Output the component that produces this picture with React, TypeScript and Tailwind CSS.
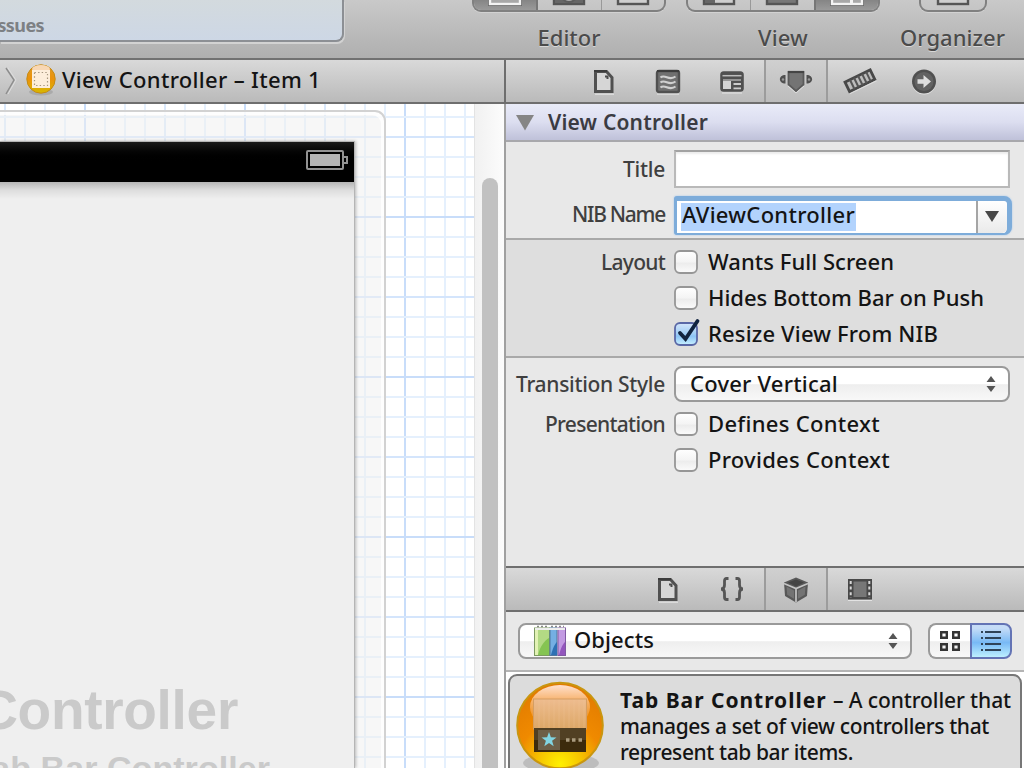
import { useLayoutEffect, useRef, useState } from "react";
import type { ReactNode } from "react";

/* Text tracked so that it fills a given width. */
function Fit({ w, className = "", children }: { w: number; className?: string; children: ReactNode }) {
  const ref = useRef<HTMLSpanElement>(null);
  const [spacing, setSpacing] = useState(0);
  useLayoutEffect(() => {
    const el = ref.current;
    if (!el) return;
    const n = (el.textContent ?? "").length;
    setSpacing((s) => s + (w - (el.getBoundingClientRect().width - s)) / n);
  }, [w]);
  return (
    <span ref={ref} className={`inline-block shrink-0 whitespace-pre ${className}`} style={{ letterSpacing: spacing }}>
      {children}
    </span>
  );
}

function Checkbox({ checked = false }: { checked?: boolean }) {
  return (
    <svg width="28" height="30" viewBox="0 0 28 30" className="shrink-0 overflow-visible">
      <defs>
        <linearGradient id="cbOff" x1="0" y1="0" x2="0" y2="1">
          <stop offset="0" stopColor="#fff" />
          <stop offset=".5" stopColor="#f4f4f4" />
          <stop offset=".55" stopColor="#ececec" />
          <stop offset="1" stopColor="#fbfbfb" />
        </linearGradient>
        <linearGradient id="cbOn" x1="0" y1="0" x2="0" y2="1">
          <stop offset="0" stopColor="#d5e6fa" />
          <stop offset=".5" stopColor="#9fcdf6" />
          <stop offset=".6" stopColor="#8cc4f6" />
          <stop offset="1" stopColor="#c9f1ff" />
        </linearGradient>
      </defs>
      <rect x="1" y="4" width="22" height="22" rx="5" fill={checked ? "url(#cbOn)" : "url(#cbOff)"} stroke={checked ? "#5a68a6" : "#969696"} strokeWidth="1.8" />
      {checked && <path d="M6 14 L11.5 20 L23.5 2" fill="none" stroke="#10233f" strokeWidth="3.8" strokeLinecap="round" />}
    </svg>
  );
}

function CheckRow({ label, w, text, tw, checked }: { label?: string; w?: number; text: string; tw: number; checked?: boolean }) {
  return (
    <div className="flex h-9 items-center">
      <div className="flex w-[159px] justify-end text-[21px] text-[#3f3f3f]">{label && <Fit w={w ?? 0}>{label}</Fit>}</div>
      <div className="ml-[9px] w-[34px] h-[30px]"><Checkbox checked={checked} /></div>
      <Fit w={tw} className="mb-[2px]">{text}</Fit>
    </div>
  );
}

function Steppers() {
  return (
    <svg width="10" height="16" viewBox="0 0 10 16" className="shrink-0">
      <path d="M5 0 L9.5 6 H.5Z M5 16 L9.5 10 H.5Z" fill="#555" />
    </svg>
  );
}

function FileIcon() {
  return (
    <svg width="22" height="26" viewBox="0 0 22 26" className="translate-y-px">
      <path d="M2.500 2.500 H13.500 L19 8.500 V22.500 H2.500Z" fill="#d6d6d6" stroke="#505050" strokeWidth="3" />
      <path d="M1 2 H14" stroke="#3c3c3c" strokeWidth="2" />
      <path d="M12 7.500 H14.500 V10" stroke="#4b4b4b" strokeWidth="2" fill="none" />
      <path d="M2 25.200 H21" stroke="#e6e6e6" />
    </svg>
  );
}

function HelpIcon() {
  return (
    <svg width="26" height="26" viewBox="0 0 26 26" className="translate-y-px">
      <rect x="2" y="2" width="22" height="21" rx="2" fill="#707070" stroke="#505050" strokeWidth="2.4" />
      <path d="M2 2 H24" stroke="#3c3c3c" strokeWidth="2" />
      <path d="M5.500 8.500 C10 4.500 14 12.500 20.500 7.500 M5.500 13.500 C10 9.500 14 17.500 20.500 12.500 M5.500 18.500 C10 14.500 14 22.500 20.500 17.500" stroke="#d0d0d0" strokeWidth="2.200" fill="none" />
      <path d="M2 25.200 H24" stroke="#e0e0e0" />
    </svg>
  );
}

function IdentityIcon() {
  return (
    <svg width="26" height="24" viewBox="0 0 26 24" className="translate-y-px">
      <rect x="1.2" y="1.2" width="23.6" height="20.6" rx="3.5" fill="#505050" />
      <path d="M3.500 5.700 H22.500" stroke="#bdbdbd" strokeWidth="1.500" />
      <path d="M4 11 H12 V19 H4Z" fill="#d3d3d3" />
      <path d="M4 10 H22" stroke="#adadad" strokeWidth="1.500" />
      <path d="M14.500 14 H22 M14.500 18.300 H22" stroke="#cbcbcb" strokeWidth="1.800" />
      <path d="M3 23 H23" stroke="#e6e6e6" />
    </svg>
  );
}

function AttributesIcon() {
  return (
    <svg width="34" height="26" viewBox="0 0 34 26" className="translate-y-px">
      <path d="M9.500 3 H24.500 V15.500 L17 22 L9.500 15.500Z" fill="#747474" stroke="#5a5a5a" strokeWidth="1.800" />
      <path d="M9 3 H25" stroke="#454545" strokeWidth="2.200" />
      <path d="M6.500 6 V14.500 C-1 14.500 -1 6 6.500 6Z M27.500 6 V14.500 C35 14.500 35 6 27.500 6Z" fill="#505050" />
      <circle cx="4" cy="10.500" r="1.200" fill="#999" />
      <circle cx="30" cy="10.500" r="1.200" fill="#999" />
      <path d="M9 17 L17 24 L25 17" stroke="#dedede" fill="none" />
    </svg>
  );
}

function RulerIcon() {
  return (
    <svg width="34" height="28" viewBox="0 0 34 28">
      <g transform="rotate(-26 17 14)">
        <rect x="3" y="8.500" width="28" height="10.500" fill="#bcbcbc" stroke="#484848" strokeWidth="2.800" />
        <path d="M8.500 8.500 V19 M13 8.500 V19 M17.500 8.500 V19 M22 8.500 V19 M26.500 8.500 V19" stroke="#555" strokeWidth="2" />
        <path d="M2 21 H32" stroke="#dedede" />
      </g>
    </svg>
  );
}

function ConnectionsIcon() {
  return (
    <svg width="26" height="26" viewBox="0 0 26 26" className="translate-y-px">
      <circle cx="13" cy="13.500" r="12" fill="#e2e2e2" />
      <circle cx="13" cy="12.500" r="12" fill="#505050" />
      <circle cx="13" cy="12.500" r="9.500" fill="#626262" />
      <path d="M6.500 10.300 H12.500 V6 L20 12.500 L12.500 19 V14.700 H6.500Z" fill="#dedede" />
    </svg>
  );
}

function BracesIcon() {
  return (
    <svg width="26" height="26" viewBox="0 0 26 26" fill="none" stroke="#555" strokeWidth="2.8">
      <path d="M9.500 2.500 H7.500 Q5.500 2.500 5.500 5 V9 Q5.500 13 2 13 Q5.500 13 5.500 17 V21 Q5.500 23.500 7.500 23.500 H9.500" />
      <path d="M16.500 2.500 H18.500 Q20.500 2.500 20.500 5 V9 Q20.500 13 24 13 Q20.500 13 20.500 17 V21 Q20.500 23.500 18.500 23.500 H16.500" />
    </svg>
  );
}

function CubeIcon() {
  return (
    <svg width="28" height="28" viewBox="0 0 28 28" className="translate-y-px">
      <path d="M14 1.500 L26 6.500 L25 20 L14 26.500 L3 20 L2 6.500Z" fill="#585858" />
      <path d="M14 3.500 L22 6.600 L14 10.500 L6 6.600Z" fill="#444" />
      <path d="M4.500 10.500 L12 14.500 V22.800 L5.200 18.800Z M23.500 10.500 L16 14.500 V22.800 L22.800 18.800Z" fill="#737373" />
      <path d="M2 7.500 L14 12.500 L26 7.500 M14 12.500 V26" stroke="#c4c4c4" strokeWidth="1.700" fill="none" />
    </svg>
  );
}

function FilmIcon() {
  return (
    <svg width="26" height="24" viewBox="0 0 26 24" className="translate-y-px">
      <rect x="1" y="1" width="24" height="20.500" fill="#484848" />
      <rect x="6.500" y="3.500" width="13" height="15.500" fill="#777" />
      <path d="M3.700 3 V20 M22.300 3 V20" stroke="#d8d8d8" strokeWidth="2" strokeDasharray="3 2.600" />
      <path d="M1 22.500 H25" stroke="#e3e3e3" />
    </svg>
  );
}

function Segment({ active, children, className = "" }: { active?: boolean; children: ReactNode; className?: string }) {
  return (
    <div className={`flex flex-1 items-end justify-center pb-[5px] ${active ? "bg-linear-to-b from-[#858585] to-[#9a9a9a]" : ""} ${className}`}>
      {children}
    </div>
  );
}

function WindowGlyph({ light, kind = "" }: { light?: boolean; kind?: string }) {
  const c = light ? "#f3f3f3" : "#555";
  return (
    <svg width="34" height="20" viewBox="0 0 34 20" className="shrink-0 translate-y-px">
      {light && <rect x="0" y="0" width="34" height="20" fill="#666" />}
      <rect x="2" y="1" width="30" height="17" fill={light ? "#a8a8a8" : kind === "filled" ? "#777" : "#cfcfcf"} stroke={c} strokeWidth="2.400" />
      {kind === "left" && <rect x="3" y="4" width="10" height="13" fill="#666" />}
      {kind === "right" && <rect x="20" y="4" width="3" height="14" fill="#f3f3f3" />}
      {kind === "face" && <><rect x="3" y="2" width="28" height="15" fill="#666" /><circle cx="17" cy="8" r="8" fill="#aaa" stroke="#5c5c5c" strokeWidth="2" /></>}
    </svg>
  );
}

function ControllerBadge() {
  return (
    <svg width="32" height="34" viewBox="0 0 32 34" className="shrink-0">
      <defs>
        <linearGradient id="badge" x1="0" y1="0" x2="0" y2="1">
          <stop offset="0" stopColor="#df9d24" />
          <stop offset=".5" stopColor="#eb920c" />
          <stop offset="1" stopColor="#d7b900" />
        </linearGradient>
      </defs>
      <ellipse cx="16" cy="29" rx="12" ry="3.500" fill="#aaa" />
      <circle cx="16" cy="16" r="14.200" fill="url(#badge)" stroke="#c68b16" />
      <ellipse cx="16" cy="6" rx="9" ry="4" fill="#f8d7b4" />
      <rect x="7" y="7" width="18" height="18" fill="#fdeedb" />
      <rect x="9.500" y="9.500" width="13" height="13" fill="none" stroke="#a5967f" strokeWidth="1.200" strokeDasharray="1.400 2.200" />
    </svg>
  );
}

function TabBarBadge() {
  return (
    <svg width="94" height="100" viewBox="0 0 94 100" className="shrink-0">
      <defs>
        <radialGradient id="orb" cx=".5" cy=".95" r=".9">
          <stop offset="0" stopColor="#fff000" />
          <stop offset=".28" stopColor="#f5c400" />
          <stop offset=".55" stopColor="#f08a00" />
          <stop offset="1" stopColor="#e27c00" />
        </radialGradient>
        <linearGradient id="gloss" x1="0" y1="0" x2="0" y2="1">
          <stop offset="0" stopColor="#ffe0cc" />
          <stop offset=".35" stopColor="#f7b36e" />
          <stop offset="1" stopColor="#f3a03c" stopOpacity=".2" />
        </linearGradient>
        <linearGradient id="pane" x1="0" y1="0" x2="0" y2="1">
          <stop offset="0" stopColor="#eebc8f" />
          <stop offset="1" stopColor="#dca766" />
        </linearGradient>
      </defs>
      <ellipse cx="47" cy="83" rx="38" ry="10" fill="#a8a8a8" opacity=".6" />
      <circle cx="46" cy="45.500" r="42.800" fill="url(#orb)" stroke="#c99610" strokeWidth="2" />
      <ellipse cx="46" cy="27" rx="30" ry="22" fill="url(#gloss)" />
      <rect x="19.500" y="19" width="53" height="30" fill="url(#pane)" stroke="#d59e62" />
      <path d="M25 20 V48 M30 20 V48 M35 20 V48 M40 20 V48 M45 20 V48 M50 20 V48 M55 20 V48 M60 20 V48 M65 20 V48 M70 20 V48" stroke="#f3c99d" opacity=".3" />
      <rect x="20" y="48" width="52" height="24" fill="#3c2b0c" />
      <rect x="20" y="48" width="52" height="12" fill="#514023" />
      <rect x="24" y="50" width="22" height="20" fill="#6d5f47" />
      <path d="M35 52 L36.900 57.300 L42.500 57.400 L38.100 60.800 L39.700 66.200 L35 63 L30.300 66.200 L31.900 60.800 L27.500 57.400 L33.100 57.300Z" fill="#82d5e2" />
      <path d="M52 60 H55.500 M58 60 H61.500 M64.500 60 H68" stroke="#a99b7e" strokeWidth="3.500" />
    </svg>
  );
}

function BooksIcon() {
  return (
    <svg width="34" height="34" viewBox="0 0 34 34" className="shrink-0">
      <path d="M4 2.500 H16 M18 2.500 H31" stroke="#888" strokeWidth="1.500" strokeDasharray="2 2" />
      <rect x="1.500" y="4" width="15" height="27.500" fill="#b3da84" stroke="#7d9a60" />
      <path d="M2 5 H5 V31 H2Z" fill="#e2f2b4" />
      <path d="M5 31 C7 22 12 16 16 14 V31Z" fill="#85c452" />
      <rect x="17" y="4" width="7" height="27.500" fill="#75afe3" stroke="#4f789f" />
      <path d="M18 31 C20 23 22 20 24 18 V31Z" fill="#2e71b4" />
      <rect x="25" y="4" width="7.500" height="27.500" fill="#c29ae2" stroke="#805aa2" />
      <path d="M26 31 C28 23 30 20 32 18 V31Z" fill="#9356bd" />
      <path d="M2 5 H32" stroke="#eee" strokeWidth="2" />
    </svg>
  );
}

const cellActive = "border-x-2 border-[#9c9c9c] bg-linear-to-b from-[#d0d0d0] to-[#bcbcbc]";
const bar = "bg-linear-to-b from-[#d9d9d9] to-[#bababa]";

function Canvas() {
  const grid: ReactNode[] = [];
  for (let x = 5; x < 476; x += 20) {
    const strong = (x - 85) % 160 === 0;
    const mid = (x - 5) % 80 === 0;
    grid.push(<path key={`v${x}`} d={`M${x} 0V664`} stroke={strong ? "#c8ddfa" : mid ? "#d9e8fb" : "#e5f0fd"} strokeWidth="2" />);
  }
  for (let y = 13; y < 664; y += 20) {
    const strong = (y - 113) % 160 === 0;
    const mid = (y - 33) % 80 === 0;
    grid.push(<path key={`h${y}`} d={`M0 ${y}H476`} stroke={strong ? "#c8ddfa" : mid ? "#d4e5fc" : "#e5f0fd"} strokeWidth="2" />);
  }
  return (
    <div className="relative w-[474px] shrink-0 overflow-hidden bg-white">
      <svg width="474" height="664" className="absolute left-0 top-0">{grid}</svg>
      <div className="absolute -left-4 top-[6px] h-[700px] w-[402px] rounded-tr-[11px] border-2 border-[#d2d2d2] bg-[#efefef]/50 shadow-[inset_-3px_3px_0_rgba(255,255,255,0.8)]" />
      <div className="absolute left-0 top-[37px] flex h-[627px] w-[355px] flex-col overflow-hidden border-r border-t border-[#b5b5b5] bg-[#efefef] shadow-[1px_0_3px_rgba(0,0,0,0.25)]">
        <div className="flex h-[40px] shrink-0 items-center justify-end bg-linear-to-b from-[#1b1b1b] via-black to-black pr-[6px]">
          <svg width="43" height="22" viewBox="0 0 43 22" className="-translate-y-[2px]">
            <rect x="2" y="2" width="36" height="18" rx="1" fill="#000" stroke="#929292" strokeWidth="2" />
            <rect x="5" y="5" width="30" height="12" fill="#b4b4b4" />
            <path d="M39 8 H42 V14 H39" fill="none" stroke="#929292" strokeWidth="2" />
          </svg>
        </div>
        <div className="h-[17px] shrink-0 bg-linear-to-b from-[#b5b5b5] via-[#dedede] to-[#efefef]" />
        <div className="mt-[479px] flex flex-col font-['Liberation_Sans',sans-serif] font-bold text-[#cacaca]">
          <div className="-ml-[100px] flex w-[338px] justify-end text-[55px] leading-[64px]">
            <Fit w={398}>View Controller</Fit>
          </div>
          <div className="-ml-[100px] flex w-[370px] justify-end pt-[6px] text-[34px] leading-[40px]">
            <Fit w={297}>Tab Bar Controller</Fit>
          </div>
        </div>
      </div>
    </div>
  );
}

export default function App() {
  return (
    <div className="flex h-[768px] w-[1024px] flex-col overflow-hidden bg-[#e8e8e8] font-['Noto_Sans',sans-serif] text-[22px] font-medium leading-[26px] text-[#141414]">
      <header className="flex h-[60px] shrink-0 border-b-2 border-[#717171] bg-linear-to-b from-[#c9c9c9] to-[#afafaf]">
        <div className="flex h-[42px] w-[344px] items-end overflow-hidden rounded-br-[8px] border-b-2 border-r-2 border-[#8c8f94] bg-linear-to-b from-[#d3dade] to-[#cdd7e5] pb-[2px] shadow-[1px_2px_0_#d2d2d2]">
          <Fit w={53} className="-ml-[9px] text-[18px] font-bold text-[#7d8084]">Issues</Fit>
        </div>
        <div className="ml-[128px] flex w-[194px] flex-col items-center">
          <div className="flex h-[12px] w-full overflow-hidden rounded-b-[9px] border-x-2 border-b-2 border-[#808080] shadow-[0_1px_0_#d2d2d2]">
            <Segment active className="border-r-2 border-[#777]"><WindowGlyph light /></Segment>
            <Segment className="border-r border-[#999]"><WindowGlyph kind="face" /></Segment>
            <Segment><WindowGlyph /></Segment>
          </div>
          <Fit w={63} className="mt-[12px] text-[#4b4b4b] [text-shadow:0_1px_0_#d8d8d8]">Editor</Fit>
        </div>
        <div className="ml-[20px] flex w-[194px] flex-col items-center">
          <div className="flex h-[12px] w-full overflow-hidden rounded-b-[9px] border-x-2 border-b-2 border-[#808080] shadow-[0_1px_0_#d2d2d2]">
            <Segment className="border-r border-[#999]"><WindowGlyph kind="left" /></Segment>
            <Segment><WindowGlyph kind="filled" /></Segment>
            <Segment active className="border-l-2 border-[#777]"><WindowGlyph light kind="right" /></Segment>
          </div>
          <Fit w={50} className="mt-[12px] text-[#4b4b4b] [text-shadow:0_1px_0_#d8d8d8]">View</Fit>
        </div>
        <div className="ml-[19px] flex w-[107px] flex-col items-center">
          <div className="flex h-[12px] w-[68px] overflow-hidden rounded-b-[9px] border-x-2 border-b-2 border-[#808080] shadow-[0_1px_0_#d2d2d2]">
            <Segment><WindowGlyph /></Segment>
          </div>
          <Fit w={105} className="mt-[12px] text-[#4b4b4b] [text-shadow:0_1px_0_#d8d8d8]">Organizer</Fit>
        </div>
      </header>

      <div className="flex min-h-0 flex-1">
        <main className="flex w-[504px] shrink-0 flex-col">
          <div className={`flex h-[44px] shrink-0 items-center border-b-2 border-[#6e6e6e] ${bar}`}>
            <svg width="20" height="30" viewBox="0 0 20 30" className="shrink-0">
              <path d="M6 2 L14 14 L6 28" fill="none" stroke="#8d8d8d" strokeWidth="1.500" />
              <path d="M8 2 L16 14 L8 28" fill="none" stroke="#dedede" />
            </svg>
            <div className="ml-[5px] mr-[5px] h-[36px]"><ControllerBadge /></div>
            <Fit w={259} className="mb-[4px]">View Controller – Item 1</Fit>
          </div>
          <div className="flex min-h-0 flex-1">
            <Canvas />
            <div className="flex w-[30px] border-l border-[#e3e3e3] bg-linear-to-r from-[#f1f1f1] to-[#fcfcfc] pl-[7px] pt-[74px]">
              <div className="h-[620px] w-4 rounded-t-full bg-[#c1c1c1]" />
            </div>
          </div>
        </main>

        <aside className="flex w-[520px] flex-col">
          <div className={`flex h-[44px] shrink-0 items-stretch border-b-2 border-l-2 border-[#6e6e6e] pl-[66px] ${bar}`}>
            {[FileIcon, HelpIcon, IdentityIcon, AttributesIcon, RulerIcon, ConnectionsIcon].map((Icon, i) => (
              <div key={i} className={`flex w-16 items-center justify-center ${i === 3 ? cellActive : ""}`}><Icon /></div>
            ))}
          </div>
          <div className="flex min-h-0 flex-1 flex-col border-l-2 border-[#a0a0a0]">
            <div className="flex h-[38px] shrink-0 items-center border-b-2 border-[#a8a8ac] bg-linear-to-b from-[#e9ebf8] via-[#dcdef0] to-[#bfc1d9] pl-[10px]">
              <svg width="18" height="16" viewBox="0 0 18 16" className="translate-y-px"><path d="M0 0 H18 L9 15.500Z" fill="#858585" /></svg>
              <Fit w={160} className="ml-[14px] text-[21px] font-semibold text-[#3b3b42]">View Controller</Fit>
            </div>

            <section className="h-[98px] shrink-0 border-b-2 border-[#a9a9a9]">
              <div className="flex h-[54px] items-center">
                <div className="flex w-[159px] justify-end text-[21px] text-[#3f3f3f]"><Fit w={42}>Title</Fit></div>
                <div className="ml-[9px] h-[38px] w-[336px] border-2 border-[#b9b9b9] border-t-[#a2a2a2] bg-white shadow-[inset_0_2px_2px_#ececec]" />
              </div>
              <div className="flex h-[38px] items-center">
                <div className="flex w-[159px] justify-end text-[21px] text-[#3f3f3f]"><Fit w={93} className="mb-[2px]">NIB Name</Fit></div>
                <div className="ml-[9px] flex h-[39px] w-[338px] items-stretch rounded-r-[8px] rounded-l-[3px] border-l-[3px] border-b-[2px] border-t-[5px] border-[#7dacda] border-r-[5px] bg-white pl-[4px] shadow-[0_0_2px_#9cc3ec]">
                  <div className="my-[2px] flex w-[175px] items-center bg-[#b2d3fd] pl-[1px]"><Fit w={173} className="mb-[5px]">AViewController</Fit></div>
                  <div className="ml-auto flex w-[31px] items-center justify-center rounded-r-[5px] border-l-2 border-[#a5a5a5] bg-linear-to-b from-white to-[#eaeaea] pr-[2px]">
                    <svg width="14" height="11" viewBox="0 0 14 11"><path d="M0 0 H14 L7 11Z" fill="#484848" /></svg>
                  </div>
                </div>
              </div>
            </section>

            <section className="h-[118px] shrink-0 border-b-2 border-[#a9a9a9] bg-[#dedede] pt-[4px]">
              <CheckRow label="Layout" w={64} text="Wants Full Screen" tw={186} />
              <CheckRow text="Hides Bottom Bar on Push" tw={276} />
              <CheckRow text="Resize View From NIB" tw={230} checked />
            </section>

            <section className="h-[208px] shrink-0 pt-[8px]">
              <div className="flex h-9 items-center">
                <div className="flex w-[159px] justify-end text-[21px] text-[#3f3f3f]"><Fit w={149}>Transition Style</Fit></div>
                <div className="ml-[9px] flex h-[36px] w-[336px] items-center justify-between rounded-[8px] border-2 border-[#9a9a9a] bg-linear-to-b from-white from-50% via-[#eeeeee] via-52% to-[#f8f8f8] pl-[14px] pr-[12px]">
                  <Fit w={148} className="mb-[2px]">Cover Vertical</Fit>
                  <Steppers />
                </div>
              </div>
              <div className="pt-[4px]">
                <CheckRow label="Presentation" w={120} text="Defines Context" tw={172} />
                <CheckRow text="Provides Context" tw={182} />
              </div>
            </section>

            <div className={`flex h-[46px] shrink-0 items-stretch border-y-2 border-[#6f6f6f] pl-[130px] ${bar}`}>
              {[FileIcon, BracesIcon, CubeIcon, FilmIcon].map((Icon, i) => (
                <div key={i} className={`flex w-16 items-center justify-center ${i === 2 ? cellActive : ""}`}><Icon /></div>
              ))}
            </div>

            <div className="flex h-[60px] shrink-0 items-center border-b-2 border-[#b4b4b4] pb-px pl-[12px]">
              <div className="flex h-[36px] w-[394px] items-center rounded-[8px] border-2 border-[#9a9a9a] bg-linear-to-b from-white from-50% via-[#eeeeee] via-52% to-[#f8f8f8] pl-[13px] pr-[12px] shrink-0">
                <BooksIcon />
                <Fit w={80} className="mb-[3px] ml-[7px]">Objects</Fit>
                <div className="ml-auto flex"><Steppers /></div>
              </div>
              <div className="ml-[16px] flex h-[36px] w-[84px] shrink-0">
                <div className="flex w-[42px] items-center justify-center rounded-l-[8px] border-y-2 border-l-2 border-[#9a9a9a] bg-linear-to-b from-white from-50% via-[#eeeeee] via-52% to-[#f8f8f8]">
                  <svg width="22" height="22" viewBox="0 0 22 22" fill="none" stroke="#343434" strokeWidth="2.400">
                    <path d="M2.200 2.200h5.600v5.600h-5.600z M14.200 2.200h5.600v5.600h-5.600z M2.200 14.200h5.600v5.600h-5.600z M14.200 14.200h5.600v5.600h-5.600z" />
                  </svg>
                </div>
                <div className="flex w-[42px] items-center justify-center rounded-r-[8px] border-2 border-[#6474b5] bg-linear-to-b from-[#c5dcf7] from-10% via-[#78b9f5] via-55% to-[#bdefff]">
                  <svg width="22" height="22" viewBox="0 0 22 22" stroke="#2f4358" strokeWidth="2">
                    <path d="M1 2 H3 M5 2 H21 M1 8 H3 M5 8 H21 M1 14 H3 M5 14 H21 M1 20 H3 M5 20 H21" />
                  </svg>
                </div>
              </div>
            </div>

            <div className="min-h-0 flex-1 overflow-hidden bg-white pl-[2px] pr-[2px] pt-[2px]">
              <div className="flex h-[120px] rounded-[9px] border-2 border-[#777] bg-[#dcdcdc] pl-[4px] pt-[4px]">
                <TabBarBadge />
                <div className="ml-[12px] flex flex-col items-start pt-[7px] leading-[26px] text-[21px]">
                  <div className="flex">
                    <Fit w={213} className="font-bold">Tab Bar Controller </Fit>
                    <Fit w={178}>– A controller that</Fit>
                  </div>
                  <Fit w={369}>manages a set of view controllers that</Fit>
                  <Fit w={233}>represent tab bar items.</Fit>
                </div>
              </div>
            </div>
          </div>
        </aside>
      </div>
    </div>
  );
}
